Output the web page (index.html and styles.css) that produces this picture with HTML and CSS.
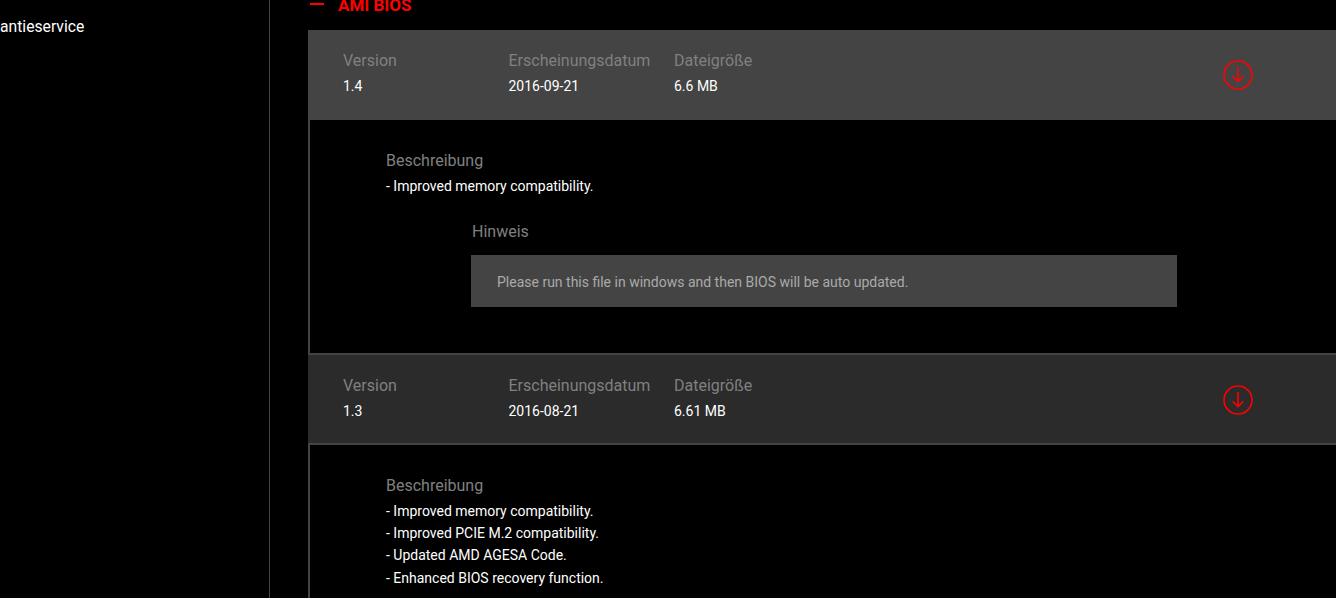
FILE: index.html
```html
<!DOCTYPE html>
<html lang="de">
<head>
  <title>AMI BIOS</title>
  <link rel="stylesheet" href="styles.css">
</head>
<body>
  <div class="page">
    <div class="sidebar">
      <div class="side-link">antieservice</div>
    </div>
    <div class="main">
      <div class="section-title"><span class="dash"></span>AMI BIOS</div>

      <div class="item">
        <div class="item-head head-light">
          <div class="col"><div class="label">Version</div><div class="value">1.4</div></div>
          <div class="col"><div class="label">Erscheinungsdatum</div><div class="value">2016-09-21</div></div>
          <div class="col"><div class="label">Dateigröße</div><div class="value">6.6 MB</div></div>
          <svg class="down" viewBox="0 0 30 30" fill="none" stroke="#ff0000" stroke-width="1.6">
            <circle cx="15" cy="15" r="14"/>
            <path d="M15 7v14.4M9.6 16.2 15 21.6l5.4-5.4"/>
          </svg>
        </div>
        <div class="item-body body-first">
          <div class="label">Beschreibung</div>
          <div class="desc">
            <p>- Improved memory compatibility.</p>
          </div>
          <div class="note">
            <div class="label">Hinweis</div>
            <div class="note-box">Please run this file in windows and then BIOS will be auto updated.</div>
          </div>
        </div>
      </div>

      <div class="item">
        <div class="item-head head-dark">
          <div class="col"><div class="label">Version</div><div class="value">1.3</div></div>
          <div class="col"><div class="label">Erscheinungsdatum</div><div class="value">2016-08-21</div></div>
          <div class="col"><div class="label">Dateigröße</div><div class="value">6.61 MB</div></div>
          <svg class="down" viewBox="0 0 30 30" fill="none" stroke="#ff0000" stroke-width="1.6">
            <circle cx="15" cy="15" r="14"/>
            <path d="M15 7v14.4M9.6 16.2 15 21.6l5.4-5.4"/>
          </svg>
        </div>
        <div class="item-body">
          <div class="label">Beschreibung</div>
          <div class="desc">
            <p>- Improved memory compatibility.</p>
            <p>- Improved PCIE M.2 compatibility.</p>
            <p>- Updated AMD AGESA Code.</p>
            <p>- Enhanced BIOS recovery function.</p>
          </div>
        </div>
      </div>
    </div>
  </div>
</body>
</html>
```

FILE: styles.css
```css
html, body {
  margin: 0;
  height: 100%;
  background: #000;
  overflow: hidden;
}
body {
  font-family: Roboto, "Liberation Sans", sans-serif;
  color: #fff;
}
.page {
  display: flex;
  height: 598px;
  overflow: hidden;
}
.sidebar {
  width: 269px;
  flex: none;
  border-right: 1px solid #444;
}
.side-link {
  margin-top: 18px;
  font-size: 15.7px;
  line-height: 18px;
}
.main {
  flex: 1;
  padding-left: 38px;
  min-width: 0;
}
.section-title {
  display: flex;
  align-items: center;
  height: 30px;
  padding-bottom: 20px;
  box-sizing: border-box;
  color: #ff0000;
  font-size: 17px;
  font-weight: 700;
}
.dash {
  width: 14px;
  height: 2px;
  margin: 0 14px 3px 2px;
  background: #ff0000;
}
.item-head {
  display: flex;
  height: 90px;
  padding: 21px 0 0 35px;
  box-sizing: border-box;
  position: relative;
}
.head-light {
  background: #444;
}
.head-dark {
  background: #2b2b2b;
  border-top: 2px solid #444;
  border-bottom: 2px solid #444;
  height: 92px;
}
.col {
  width: 165.5px;
}
.label {
  color: #808080;
  font-size: 16px;
  line-height: 20px;
}
.value {
  margin-top: 5px;
  font-size: 14px;
  line-height: 20px;
}
.down {
  position: absolute;
  left: 915px;
  top: 30px;
  width: 30px;
  height: 30px;
}
.item-body {
  border-left: 2px solid #444;
  padding: 31px 0 20px 76px;
}
.body-first {
  height: 233px;
  box-sizing: border-box;
}
.desc p {
  margin: 0;
  font-size: 14px;
  line-height: 22.4px;
}
.desc {
  margin-top: 3.5px;
}
.note {
  margin: 25.5px 159px 0 85px;
}
.note .label {
  margin-left: 1px;
}
.note-box {
  margin-top: 13px;
  height: 52px;
  padding-left: 26px;
  background: #444;
  color: #aaa;
  font-size: 14px;
  line-height: 54px;
}
```
